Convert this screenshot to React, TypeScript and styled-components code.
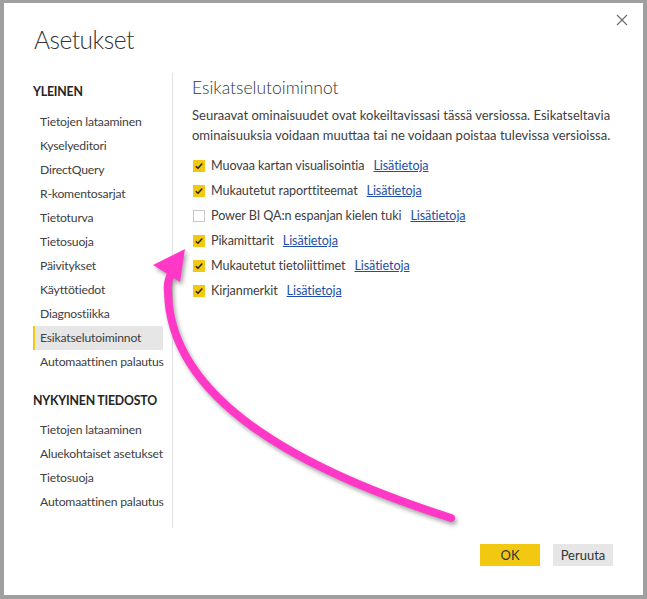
import React from "react";
import styled, { createGlobalStyle } from "styled-components";

const GlobalStyle = createGlobalStyle`
  html, body {
    margin: 0;
    padding: 0;
    background: #a0a0a0;
  }
  body {
    font-family: Lato, "Open Sans", sans-serif;
    color: #333333;
  }
`;

const Frame = styled.div`
  width: 647px;
  height: 599px;
  padding: 3px 4px 4px 4px;
  box-sizing: border-box;
  position: relative;
`;

const Dialog = styled.div`
  background: #ffffff;
  width: 639px;
  height: 592px;
  display: flex;
  flex-direction: column;
  position: relative;
`;

const CloseButton = styled.button`
  position: absolute;
  top: 6px;
  right: 10px;
  width: 22px;
  height: 22px;
  border: none;
  background: transparent;
  padding: 0;
  display: flex;
  align-items: center;
  justify-content: center;
`;

const Title = styled.h1`
  margin: 0;
  padding: 20px 0 0 30px;
  height: 50px;
  box-sizing: border-box;
  font-size: 24.5px;
  letter-spacing: -0.5px;
  line-height: 34px;
  font-weight: 300;
  color: #333333;
`;

const Body = styled.div`
  display: flex;
  margin-top: 20px;
`;

const Nav = styled.nav`
  width: 169px;
  height: 455px;
  box-sizing: border-box;
  border-right: 1px solid #e1e1e1;
  padding: 7px 10px 0 29px;
`;

const NavHeader = styled.div<{ $spaced?: boolean }>`
  font-size: 12.3px;
  font-weight: 700;
  letter-spacing: -0.2px;
  line-height: 24px;
  color: #252525;
  margin-top: ${(p) => (p.$spaced ? "15px" : "0")};
  margin-bottom: ${(p) => (p.$spaced ? "5px" : "6px")};
  white-space: nowrap;
`;

const NavItem = styled.div<{ $active?: boolean }>`
  font-size: 12.2px;
  letter-spacing: -0.2px;
  line-height: 24px;
  height: 24px;
  padding-left: 5px;
  width: 130px;
  box-sizing: border-box;
  white-space: nowrap;
  color: #404040;
  border-left: 2px solid ${(p) => (p.$active ? "#f2c811" : "transparent")};
  background: ${(p) => (p.$active ? "#e6e6e6" : "transparent")};
`;

const Content = styled.section`
  flex: 1;
  padding: 3px 30px 0 19px;
`;

const Heading = styled.h2`
  margin: 0;
  font-size: 17.5px;
  font-weight: 300;
  line-height: 24px;
  color: #333333;
`;

const Paragraph = styled.p`
  margin: 5px 0 8px 0;
  font-size: 13px;
  line-height: 20px;
  color: #404040;
`;

const OptionRow = styled.div`
  display: flex;
  align-items: center;
  height: 25px;
  font-size: 12.6px;
  letter-spacing: -0.1px;
  color: #404040;
  white-space: nowrap;
`;

const Box = styled.span<{ $checked: boolean }>`
  width: 12px;
  height: 12px;
  box-sizing: border-box;
  margin: 0 6px 0 1px;
  display: inline-flex;
  align-items: center;
  justify-content: center;
  background: ${(p) => (p.$checked ? "#f2c811" : "#ffffff")};
  border: ${(p) => (p.$checked ? "none" : "1px solid #c8c8c8")};
`;

const Link = styled.a`
  margin-left: 9px;
  color: #1d4fa8;
  text-decoration: underline;
`;

const Footer = styled.div`
  display: flex;
  justify-content: flex-end;
  gap: 13px;
  padding: 16px 30px 0 0;
`;

const Button = styled.button<{ $primary?: boolean }>`
  width: 60px;
  height: 22px;
  border: none;
  padding: 0;
  font-family: inherit;
  font-size: 13px;
  color: #333333;
  background: ${(p) => (p.$primary ? "#f2c811" : "#e6e6e6")};
`;

const Overlay = styled.svg`
  position: absolute;
  left: 0;
  top: 0;
  pointer-events: none;
  filter: drop-shadow(2px 3px 2px rgba(0, 0, 0, 0.35));
`;

const general = [
  "Tietojen lataaminen",
  "Kyselyeditori",
  "DirectQuery",
  "R-komentosarjat",
  "Tietoturva",
  "Tietosuoja",
  "Päivitykset",
  "Käyttötiedot",
  "Diagnostiikka",
  "Esikatselutoiminnot",
  "Automaattinen palautus",
];

const currentFile = [
  "Tietojen lataaminen",
  "Aluekohtaiset asetukset",
  "Tietosuoja",
  "Automaattinen palautus",
];

const options = [
  { label: "Muovaa kartan visualisointia", checked: true },
  { label: "Mukautetut raporttiteemat", checked: true },
  { label: "Power BI QA:n espanjan kielen tuki", checked: false },
  { label: "Pikamittarit", checked: true },
  { label: "Mukautetut tietoliittimet", checked: true },
  { label: "Kirjanmerkit", checked: true },
];

const Check = () => (
  <svg width="10" height="10" viewBox="0 0 10 10">
    <path d="M1.8 5.2 L4 7.3 L8.3 2.6" fill="none" stroke="#222" strokeWidth="1.5" />
  </svg>
);

const App = () => {
  return (
    <>
      <GlobalStyle />
      <Frame>
        <Dialog>
          <CloseButton aria-label="Sulje">
            <svg width="12" height="12" viewBox="0 0 12 12">
              <path d="M1 1 L11 11 M11 1 L1 11" stroke="#6a6a6a" strokeWidth="1.1" />
            </svg>
          </CloseButton>
          <Title>Asetukset</Title>
          <Body>
            <Nav>
              <NavHeader>YLEINEN</NavHeader>
              {general.map((item) => (
                <NavItem key={item} $active={item === "Esikatselutoiminnot"}>
                  {item}
                </NavItem>
              ))}
              <NavHeader $spaced>NYKYINEN TIEDOSTO</NavHeader>
              {currentFile.map((item) => (
                <NavItem key={item}>{item}</NavItem>
              ))}
            </Nav>
            <Content>
              <Heading>Esikatselutoiminnot</Heading>
              <Paragraph>
                Seuraavat ominaisuudet ovat kokeiltavissasi tässä versiossa. Esikatseltavia
                ominaisuuksia voidaan muuttaa tai ne voidaan poistaa tulevissa versioissa.
              </Paragraph>
              {options.map((o) => (
                <OptionRow key={o.label}>
                  <Box $checked={o.checked}>{o.checked && <Check />}</Box>
                  {o.label}
                  <Link href="#">Lisätietoja</Link>
                </OptionRow>
              ))}
            </Content>
          </Body>
          <Footer>
            <Button $primary>OK</Button>
            <Button>Peruuta</Button>
          </Footer>
        </Dialog>
        <Overlay width="647" height="599" viewBox="0 0 647 599">
          <path
            d="M451 518 C300 470 170 400 168 292 C167 284 169 278 171 274"
            fill="none"
            stroke="#ff38c8"
            strokeWidth="8"
            strokeLinecap="round"
          />
          <path d="M185 249 L153 265 L180 282 Z" fill="#ff38c8" />
        </Overlay>
      </Frame>
    </>
  );
};

export default App;
